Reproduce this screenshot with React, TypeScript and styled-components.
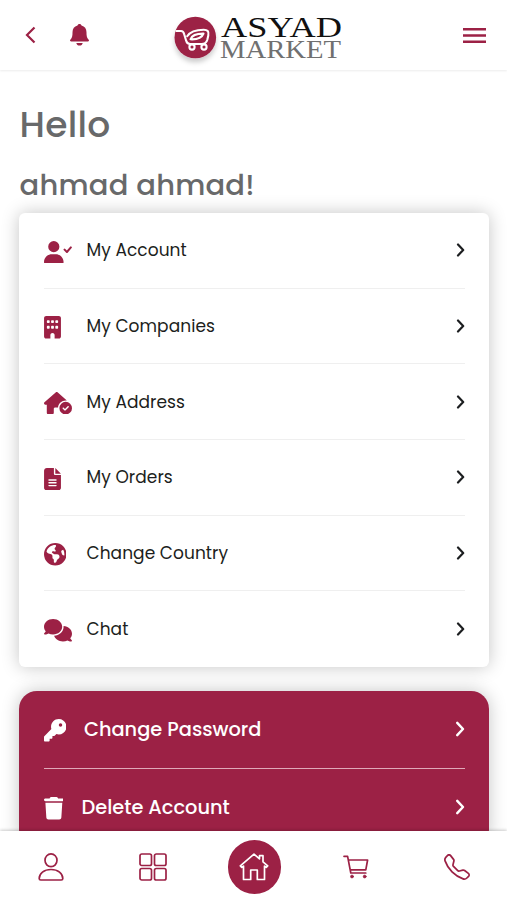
import React from 'react';
import styled, { createGlobalStyle, css } from 'styled-components';
import {
  FaBuilding,
  FaComments,
  FaEarthAmericas,
  FaFileLines,
  FaHouseCircleCheck,
  FaKey,
  FaTrash,
} from 'react-icons/fa6';
import { BsTelephone } from 'react-icons/bs';

const colors = {
  brand: '#9c2145',
  text: '#1c1e20',
  heading: '#68696a',
  line: '#efefef',
};

const GlobalStyle = createGlobalStyle`
  * {
    box-sizing: border-box;
  }
  body {
    margin: 0;
    background: #fff;
    font-family: Poppins, Inter, sans-serif;
  }
`;

const Screen = styled.div`
  display: flex;
  flex-direction: column;
  height: 900px;
  overflow: hidden;
`;

const Header = styled.header`
  display: grid;
  grid-template-columns: 141px 190px 1fr;
  flex: none;
  height: 70px;
  padding: 0 21px 0 24px;
  box-shadow: 0 1px 2px rgba(0, 0, 0, 0.08);
`;

const HeaderSide = styled.div<{ $end?: boolean }>`
  display: flex;
  align-items: center;
  gap: 32px;
  justify-content: ${({ $end }) => ($end ? 'flex-end' : 'flex-start')};
`;

const IconButton = styled.button`
  display: flex;
  padding: 0;
  border: 0;
  background: none;
  color: ${colors.brand};
`;

const Main = styled.main`
  flex: 1;
  min-height: 0;
  overflow: hidden;
  padding: 30px 18px 0 19px;
`;

const Greeting = styled.h1`
  margin: 0;
  height: 50px;
  padding-left: 0.6px;
  line-height: 50px;
  font-size: 36px;
  font-weight: 500;
  letter-spacing: 0.25px;
  color: ${colors.heading};
`;

const UserName = styled.h2`
  margin: 13px 0 0;
  height: 50px;
  padding-left: 0.6px;
  line-height: 45px;
  font-size: 29px;
  font-weight: 500;
  letter-spacing: 0.2px;
  color: ${colors.heading};
`;

const Card = styled.section<{ $filled?: boolean }>`
  padding: 0 24.5px;
  border-radius: 6px;
  background: #fff;
  color: ${colors.text};
  box-shadow: 0 0 18px rgba(0, 0, 0, 0.23);

  ${({ $filled }) =>
    $filled &&
    css`
      margin-top: 24px;
      border-radius: 18px;
      background: ${colors.brand};
      color: #fff;
    `}
`;

const Row = styled.a<{ $filled?: boolean }>`
  display: flex;
  align-items: center;
  height: ${({ $filled }) => ($filled ? 78 : 75.7)}px;
  padding-bottom: ${({ $filled }) => ($filled ? 1 : 0)}px;
  border-bottom: ${({ $filled }) => ($filled ? '1.5px solid #e0a9b9' : `1px solid ${colors.line}`)};

  &:last-child {
    border-bottom-color: transparent;
  }
`;

const RowIcon = styled.span<{ $slot: number; $width: number; $filled?: boolean }>`
  display: flex;
  flex: none;
  width: ${({ $slot }) => $slot}px;
  padding-top: 3px;
  color: ${({ $filled }) => ($filled ? '#fff' : colors.brand)};

  svg {
    width: ${({ $width }) => $width}px;
    height: 22.5px;
  }
`;

const RowLabel = styled.span<{ $filled?: boolean }>`
  flex: 1;
  white-space: nowrap;
  font-size: ${({ $filled }) => ($filled ? 19.35 : 17)}px;
  font-weight: ${({ $filled }) => ($filled ? 500 : 400)};
  letter-spacing: ${({ $filled }) => ($filled ? 0 : 0.06)}px;
`;

const Nav = styled.nav`
  position: relative;
  display: grid;
  grid-template-columns: repeat(5, 101.6px);
  align-items: center;
  justify-items: center;
  flex: none;
  height: 69px;
  padding-left: 0.3px;
  background: #fff;
  color: ${colors.brand};
  box-shadow: 0 -1px 3px rgba(0, 0, 0, 0.2);
`;

const NavItem = styled.a<{ $active?: boolean }>`
  display: flex;
  align-items: center;
  justify-content: center;
  width: 53.5px;
  height: 53.5px;
  border-radius: 50%;
  margin-top: 3px;
  ${({ $active }) =>
    $active &&
    css`
      background: ${colors.brand};
      color: #fff;
    `}
`;

const Logo = () => (
  <svg width="190" height="70" viewBox="165 0 190 70">
    <defs>
      <filter id="logoShadow" x="-30%" y="-30%" width="160%" height="170%">
        <feDropShadow dx="0" dy="4" stdDeviation="2.5" floodOpacity="0.2" />
      </filter>
    </defs>
    <circle cx="195.3" cy="37.5" r="20.8" fill={colors.brand} filter="url(#logoShadow)" />
    <g fill="none" stroke="#fff" strokeWidth="2.1" strokeLinecap="round" strokeLinejoin="round">
      <path d="M176.500 31h4.500c2.200 0 2.700 1.200 3.200 3.200l1.800 6c.7 2.600 1.700 3.800 4 3.800h11.500c3.200 0 5-1.300 5.800-4.300l1-4.300c.9-4-.9-5.700-4.600-5.700-7 0-13.500 1.800-16.500 6.500" />
      <path d="M190.500 39.300c1.500-4 6.500-5.800 13-5.700-1.700 4.200-7 6-13 5.700z" />
      <circle cx="192" cy="47" r="2.6" />
      <circle cx="204" cy="47" r="2.6" />
    </g>
    <text
      x="221"
      y="37"
      textLength="121"
      lengthAdjust="spacingAndGlyphs"
      fontFamily="'Liberation Serif', serif"
      fontSize="29.5"
      fill="#111"
    >
      ASYAD
    </text>
    <text
      x="220"
      y="57.5"
      textLength="121"
      lengthAdjust="spacingAndGlyphs"
      fontFamily="'Liberation Serif', serif"
      fontSize="26"
      fill="#707070"
    >
      MARKET
    </text>
  </svg>
);

const Back = () => (
  <svg width="14" height="18" viewBox="0 0 14 18" fill="none" stroke="currentColor" strokeWidth="2.2">
    <path d="M10.5 1.5 3 9l7.5 7.5" />
  </svg>
);

const Bell = () => (
  <svg width="19" height="22" viewBox="0 0 18 22" preserveAspectRatio="none" fill="currentColor">
    <path d="M9 0c1 0 1.7.6 1.9 1.6 3 .8 4.7 3.2 4.7 6.4 0 4.3.5 6 1.9 7.5.8.9.6 2-.6 2H1.100c-1.200 0-1.400-1.100-.6-2C1.900 14 2.400 12.300 2.400 8c0-3.200 1.700-5.600 4.700-6.400C7.300.6 8 0 9 0z" />
    <path d="M6 19h6c-.2 1.600-1.400 2.600-3 2.600S6.200 20.600 6 19z" />
  </svg>
);

const Burger = () => (
  <svg width="23" height="17" viewBox="0 0 23 17" stroke="currentColor" strokeWidth="2.4">
    <path d="M0 2.200h23M0 8.500h23M0 14.800h23" />
  </svg>
);

const Chevron = ({ big }: { big?: boolean }) => (
  <svg
    width={big ? 10 : 9}
    height={big ? 16 : 14}
    viewBox="0 0 9 14"
    fill="none"
    stroke="currentColor"
    strokeWidth="2.2"
    strokeLinecap="round"
    strokeLinejoin="round"
  >
    <path d="M2 1.500 7.200 7 2 12.500" />
  </svg>
);

const UserCheck = () => (
  <svg viewBox="0 0 640 512" fill="currentColor">
    <path d="M96 128a128 128 0 1 1 256 0 128 128 0 1 1-256 0zM0 482.300C0 383.800 79.800 304 178.300 304h91.400C368.200 304 448 383.800 448 482.300c0 16.400-13.300 29.700-29.700 29.700H29.700C13.300 512 0 498.700 0 482.300z" />
    <path
      d="M470 196l54 54 90-104"
      fill="none"
      stroke="currentColor"
      strokeWidth="46"
      strokeLinecap="round"
      strokeLinejoin="round"
    />
  </svg>
);

const navStroke = {
  fill: 'none',
  stroke: 'currentColor',
  strokeWidth: 1.7,
  strokeLinejoin: 'round' as const,
  strokeLinecap: 'round' as const,
};

const UserIcon = () => (
  <svg width="26" height="28" viewBox="0 0 26 28" {...navStroke}>
    <ellipse cx="13" cy="7.300" rx="6" ry="6.400" />
    <path d="M1.200 25.500C1.200 20.500 6 16.500 13 16.500s11.800 4 11.800 9c0 1-.6 1.500-1.500 1.500H2.700c-.9 0-1.500-.5-1.500-1.500z" />
  </svg>
);

const GridIcon = () => (
  <svg width="28" height="28" viewBox="0 0 28 28" {...navStroke}>
    <rect x="1" y="1" width="11.5" height="11.5" rx="1.8" />
    <rect x="15.5" y="1" width="11.5" height="11.5" rx="1.8" />
    <rect x="1" y="15.5" width="11.5" height="11.5" rx="1.8" />
    <rect x="15.5" y="15.5" width="11.5" height="11.5" rx="1.8" />
  </svg>
);

const HomeIcon = () => (
  <svg width="30" height="28" viewBox="0 0 30 28" {...navStroke}>
    <path d="M15 1.200 1.300 12.800l1.500 1.600 1.700-1.300V26.500h7.200V17h6.600v9.500h7.200V13.100l1.700 1.300 1.500-1.600-4.700-4V2.700h-3.500v3.100z" />
  </svg>
);

const CartIcon = () => (
  <svg width="26" height="24" viewBox="0 0 26 24" {...navStroke}>
    <path d="M1 1.300h3.600l3.200 16.700h15M5.400 5h19.200l-1.800 9.800H7.300" />
    <circle cx="9" cy="21.5" r="1.5" fill="currentColor" strokeWidth=".6" />
    <circle cx="21.7" cy="21.5" r="1.5" fill="currentColor" strokeWidth=".6" />
  </svg>
);

const accountItems = [
  { label: 'My Account', icon: <UserCheck />, width: 28 },
  { label: 'My Companies', icon: <FaBuilding />, width: 17 },
  { label: 'My Address', icon: <FaHouseCircleCheck />, width: 28 },
  { label: 'My Orders', icon: <FaFileLines />, width: 17 },
  { label: 'Change Country', icon: <FaEarthAmericas />, width: 22.5 },
  { label: 'Chat', icon: <FaComments />, width: 28 },
];

const securityItems = [
  { label: 'Change Password', icon: <FaKey />, width: 22.5, slot: 40.5 },
  { label: 'Delete Account', icon: <FaTrash />, width: 19.7, slot: 38 },
];

const App = () => (
  <>
    <GlobalStyle />
    <Screen>
      <Header>
        <HeaderSide>
          <IconButton aria-label="Back">
            <Back />
          </IconButton>
          <IconButton aria-label="Notifications">
            <Bell />
          </IconButton>
        </HeaderSide>
        <Logo />
        <HeaderSide $end>
          <IconButton aria-label="Menu">
            <Burger />
          </IconButton>
        </HeaderSide>
      </Header>

      <Main>
        <Greeting>Hello</Greeting>
        <UserName>ahmad ahmad!</UserName>

        <Card>
          {accountItems.map(({ label, icon, width }) => (
            <Row key={label}>
              <RowIcon $slot={43} $width={width}>
                {icon}
              </RowIcon>
              <RowLabel>{label}</RowLabel>
              <Chevron />
            </Row>
          ))}
        </Card>

        <Card $filled>
          {securityItems.map(({ label, icon, width, slot }) => (
            <Row key={label} $filled>
              <RowIcon $filled $slot={slot} $width={width}>
                {icon}
              </RowIcon>
              <RowLabel $filled>{label}</RowLabel>
              <Chevron big />
            </Row>
          ))}
        </Card>
      </Main>

      <Nav>
        <NavItem>
          <UserIcon />
        </NavItem>
        <NavItem>
          <GridIcon />
        </NavItem>
        <NavItem $active>
          <HomeIcon />
        </NavItem>
        <NavItem>
          <CartIcon />
        </NavItem>
        <NavItem>
          <BsTelephone size={26} />
        </NavItem>
      </Nav>
    </Screen>
  </>
);

export default App;
